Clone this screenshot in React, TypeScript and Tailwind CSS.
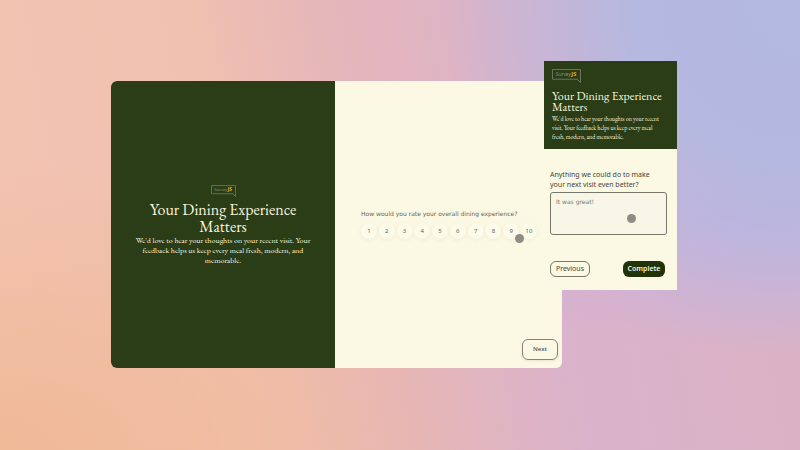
const ratings = [1, 2, 3, 4, 5, 6, 7, 8, 9, 10];

function Logo({ className }: { className: string }) {
  return (
    <svg viewBox="0 0 54 26" className={className} role="img" aria-label="SurveyJS logo">
      <path d="M1 1H53V25L47 19H1Z" fill="none" stroke="#74816a" strokeWidth="1.6" />
      <text x="7" y="13" fontSize="9" fontFamily="Noto Sans, sans-serif" fill="#8c967e">
        Survey
      </text>
      <text x="36" y="13" fontSize="10" fontWeight="800" fontFamily="Noto Sans, sans-serif" fill="#e0aa18">
        JS
      </text>
    </svg>
  );
}

function Pointer({ className }: { className: string }) {
  return <span aria-hidden="true" className={`absolute size-[9px] rounded-full bg-[#8d8d82] ${className}`} />;
}

function DesktopSurvey() {
  return (
    <section className="mr-[115px] grid min-h-[287px] grid-cols-[224fr_227fr] overflow-hidden rounded-md bg-[#fbf8e4]">
      <header className="flex flex-col items-center justify-center bg-[#2a3d17] px-6 text-center font-['EB_Garamond','Liberation_Serif',serif] text-[#f7f4dd]">
        <Logo className="mb-1 h-[12px] w-[27px]" />
        <h1 className="text-[16px] leading-[17px]">Your Dining Experience Matters</h1>
        <p className="text-[8px] leading-[10px]">
          We'd love to hear your thoughts on your recent visit. Your feedback helps us keep every meal fresh, modern, and
          memorable.
        </p>
      </header>
      <form className="flex flex-col px-1 pb-2 text-[#65665a]">
        <div className="my-auto pt-7 pl-[22px]">
          <fieldset>
            <legend className="font-['DejaVu_Sans',sans-serif] text-[6px] leading-[10px]">
              How would you rate your overall dining experience?
            </legend>
            <div className="relative flex w-[176px] justify-between pt-1">
              {ratings.map((n) => (
                <button
                  key={n}
                  type="button"
                  className="size-4 rounded-full bg-[#fcfae9] text-[6px] leading-4 shadow-[0_1px_4px_#efecd8]"
                >
                  {n}
                </button>
              ))}
              <Pointer className="top-[15px] right-[13px]" />
            </div>
          </fieldset>
        </div>
        <button
          type="button"
          className="h-[21px] w-9 self-end rounded-md border border-[#85867a] text-[6px] font-semibold shadow-[0_1px_3px_#e4e1cb]"
        >
          Next
        </button>
      </form>
    </section>
  );
}

function MobileSurvey() {
  return (
    <section className="absolute top-0 right-0 flex w-[133px] flex-col bg-[#fbf8e4]">
      <header className="flex h-[88px] flex-col bg-[#2a3d17] px-2 pt-2 font-['EB_Garamond','Liberation_Serif',serif] text-[#f7f4dd]">
        <Logo className="h-[14px] w-[29px]" />
        <h2 className="mt-2 text-[12px] leading-[11px]">Your Dining Experience Matters</h2>
        <p className="mt-0.5 pr-1.5 text-[6px] leading-[9px]">
          We'd love to hear your thoughts on your recent visit. Your feedback helps us keep every meal fresh, modern, and
          memorable.
        </p>
      </header>
      <form className="px-[6px] pt-[21px] pb-[13px] text-[#45463b]">
        <label htmlFor="comments" className="block text-[7px] leading-[10px]">
          Anything we could do to make
          <br />
          your next visit even better?
        </label>
        <div className="relative mt-[2px] mr-1">
          <textarea
            id="comments"
            defaultValue="It was great!"
            className="block h-[43px] w-full resize-none rounded-[3px] border border-[#77786a] bg-[#f8f6e6] px-[5px] py-1 font-['DejaVu_Sans',sans-serif] text-[6px] leading-[9px] text-[#77786c] outline-none"
          />
          <Pointer className="top-[22px] right-[31px]" />
        </div>
        <div className="mt-[26px] mr-[6px] flex items-center justify-between">
          <button type="button" className="h-4 w-10 rounded-md border border-[#77786a] text-[7px] leading-3">
            Previous
          </button>
          <button type="submit" className="h-4 w-[42px] rounded-md bg-[#203309] text-[7px] leading-3 font-semibold text-[#f7f4dd]">
            Complete
          </button>
        </div>
      </form>
    </section>
  );
}

export default function App() {
  return (
    <main className="min-h-screen bg-[radial-gradient(circle_at_100%_0%,#b3b9e1_0%,#b5b8e0_18%,#b5b8e000_39%),radial-gradient(ellipse_at_94%_48%,#c8b1dc_0%,#ceb1d9a0_18%,#c8b1dc00_40%),radial-gradient(ellipse_at_0%_100%,#f0b997_0%,#f0b99700_45%),linear-gradient(80deg,#f3c4b2_0%,#f0c0b0_30%,#e4b5bb_48%,#dab3cb_68%,#dcb2c3_100%)] pt-[61px] pr-[123px] pb-10 pl-[111px] font-['Noto_Sans',sans-serif]">
      <div className="relative pt-5">
        <DesktopSurvey />
        <MobileSurvey />
      </div>
    </main>
  );
}
